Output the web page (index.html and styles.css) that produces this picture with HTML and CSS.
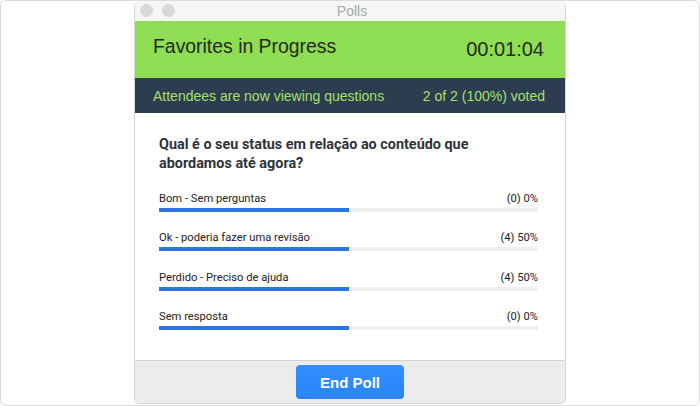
FILE: index.html
```html
<!DOCTYPE html>
<html>
<head>
<meta charset="utf-8">
<link rel="stylesheet" href="styles.css">
</head>
<body>
<div class="frame">
  <div class="window">
    <div class="titlebar">
      <div class="lights"><span class="light"></span><span class="light"></span></div>
      <div class="title">Polls</div>
    </div>
    <div class="header">
      <div class="poll-name">Favorites in Progress</div>
      <div class="timer">00:01:04</div>
    </div>
    <div class="status">
      <div>Attendees are now viewing questions</div>
      <div>2 of 2 (100%) voted</div>
    </div>
    <div class="content">
      <div class="question">Qual é o seu status em relação ao conteúdo que abordamos até agora?</div>
      <div class="options">
        <div class="option">
          <div class="option-row"><span>Bom - Sem perguntas</span><span>(0) 0%</span></div>
          <div class="track"><div class="fill" style="width:50%"></div></div>
        </div>
        <div class="option">
          <div class="option-row"><span>Ok - poderia fazer uma revisão</span><span>(4) 50%</span></div>
          <div class="track"><div class="fill" style="width:50%"></div></div>
        </div>
        <div class="option">
          <div class="option-row"><span>Perdido - Preciso de ajuda</span><span>(4) 50%</span></div>
          <div class="track"><div class="fill" style="width:50%"></div></div>
        </div>
        <div class="option">
          <div class="option-row"><span>Sem resposta</span><span>(0) 0%</span></div>
          <div class="track"><div class="fill" style="width:50%"></div></div>
        </div>
      </div>
    </div>
    <div class="footer">
      <button class="end-btn">End Poll</button>
    </div>
  </div>
</div>
</body>
</html>
```
FILE: styles.css
```css
* { box-sizing: border-box; }
html, body { margin: 0; padding: 0; background: #fff; }
.frame {
  width: 700px;
  height: 406px;
  border: 1px solid #dcdcdc;
  border-radius: 6px;
  display: flex;
  justify-content: center;
  align-items: flex-start;
  background: #fff;
}
.window {
  width: 432px;
  height: 403px;
  border: 1px solid #d6d6d6;
  border-top: none;
  border-radius: 6px 6px 5px 5px;
  display: flex;
  flex-direction: column;
  overflow: hidden;
  font-family: "Liberation Sans", Arial, sans-serif;
}
.titlebar {
  height: 20px;
  background: #f6f6f6;
  position: relative;
  display: flex;
  align-items: center;
  justify-content: center;
}
.lights {
  position: absolute;
  left: 5px;
  top: 3px;
  display: flex;
  gap: 9px;
}
.light {
  width: 13px;
  height: 13px;
  border-radius: 50%;
  background: #d8d8d8;
}
.title {
  font-size: 14px;
  color: #a8a8a8;
  margin-left: 4px;
}
.header {
  height: 57px;
  background: #8fdc55;
  display: flex;
  justify-content: space-between;
  padding: 0 21px 0 18px;
  color: #1f2a1a;
}
.poll-name {
  font-size: 19.4px;
  margin-top: 14px;
}
.timer {
  font-size: 20px;
  margin-top: 17px;
}
.status {
  height: 35px;
  background: #2b3d4f;
  color: #a8e06e;
  font-size: 14px;
  display: flex;
  justify-content: space-between;
  align-items: center;
  padding: 1px 20px 0 18px;
}
.content {
  flex: 1;
  background: #fff;
  padding: 22px 27px 0 24px;
  font-family: Roboto, "Liberation Sans", sans-serif;
}
.question {
  font-size: 14.4px;
  font-weight: 700;
  color: #2e3338;
  line-height: 19px;
  padding-right: 40px;
}
.options {
  margin-top: 19px;
  display: flex;
  flex-direction: column;
  gap: 19.3px;
}
.option-row {
  display: flex;
  justify-content: space-between;
  font-size: 11.2px;
  color: #222;
  line-height: 14px;
}
.track {
  margin-top: 2px;
  height: 4px;
  background: #efefef;
}
.fill {
  height: 100%;
  background: #2b73e6;
}
.footer {
  height: 43px;
  background: #ececec;
  border-top: 1px solid #d4d4d4;
  display: flex;
  justify-content: center;
  padding-top: 4px;
}
.end-btn {
  width: 108px;
  height: 34px;
  border: none;
  border-radius: 4px;
  background: linear-gradient(#3290ff, #2a83fb);
  color: #fff;
  font-family: "Liberation Sans", Arial, sans-serif;
  font-size: 15px;
  font-weight: 700;
  padding: 0;
}
```
